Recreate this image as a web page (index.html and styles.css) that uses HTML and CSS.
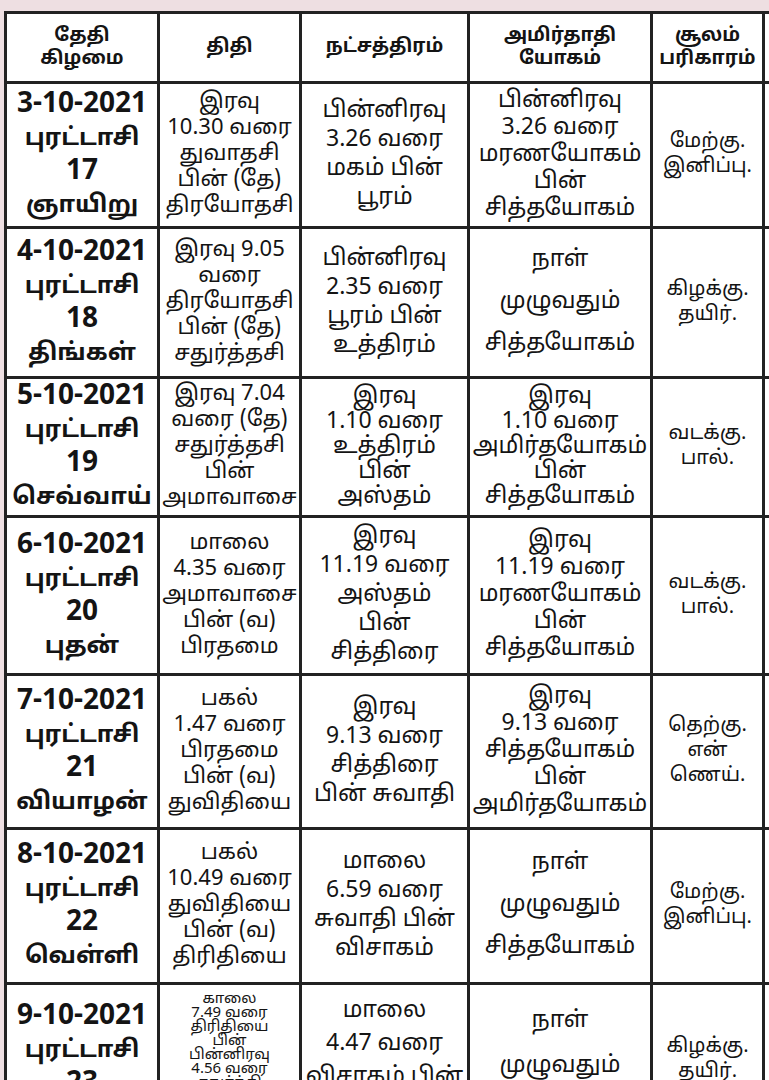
FILE: index.html
```html
<!DOCTYPE html>
<html lang="ta">
<head>
<meta charset="utf-8">
<title>பஞ்சாங்கம்</title>
<link rel="stylesheet" href="styles.css">
</head>
<body>
<div class="page">
<table class="pan">
  <colgroup>
    <col class="w1"><col class="w2"><col class="w3"><col class="w4"><col class="w5"><col class="w6">
  </colgroup>
  <thead>
    <tr class="hdr">
      <th>தேதி<br>கிழமை</th>
      <th>திதி</th>
      <th>நட்சத்திரம்</th>
      <th>அமிர்தாதி<br>யோகம்</th>
      <th>சூலம்<br>பரிகாரம்</th>
      <th></th>
    </tr>
  </thead>
  <tbody>
    <tr class="r1">
      <td class="date"><span class="num">3-10-2021</span><br>புரட்டாசி<br><span class="num">17</span><br>ஞாயிறு</td>
      <td class="thithi">இரவு<br>10.30 வரை<br>துவாதசி<br>பின் (தே)<br>திரயோதசி</td>
      <td class="star">பின்னிரவு<br>3.26 வரை<br>மகம் பின்<br>பூரம்</td>
      <td class="yoga">பின்னிரவு<br>3.26 வரை<br>மரணயோகம்<br>பின்<br>சித்தயோகம்</td>
      <td class="soolam">மேற்கு.<br>இனிப்பு.</td>
      <td></td>
    </tr>
    <tr class="r2">
      <td class="date"><span class="num">4-10-2021</span><br>புரட்டாசி<br><span class="num">18</span><br>திங்கள்</td>
      <td class="thithi">இரவு 9.05<br>வரை<br>திரயோதசி<br>பின் (தே)<br>சதுர்த்தசி</td>
      <td class="star">பின்னிரவு<br>2.35 வரை<br>பூரம் பின்<br>உத்திரம்</td>
      <td class="yoga wide">நாள்<br>முழுவதும்<br>சித்தயோகம்</td>
      <td class="soolam">கிழக்கு.<br>தயிர்.</td>
      <td></td>
    </tr>
    <tr class="r3">
      <td class="date"><span class="num">5-10-2021</span><br>புரட்டாசி<br><span class="num">19</span><br>செவ்வாய்</td>
      <td class="thithi">இரவு 7.04<br>வரை (தே)<br>சதுர்த்தசி<br>பின்<br>அமாவாசை</td>
      <td class="star tight">இரவு<br>1.10 வரை<br>உத்திரம்<br>பின்<br>அஸ்தம்</td>
      <td class="yoga tight">இரவு<br>1.10 வரை<br>அமிர்தயோகம்<br>பின்<br>சித்தயோகம்</td>
      <td class="soolam">வடக்கு.<br>பால்.</td>
      <td></td>
    </tr>
    <tr class="r4">
      <td class="date"><span class="num">6-10-2021</span><br>புரட்டாசி<br><span class="num">20</span><br>புதன்</td>
      <td class="thithi">மாலை<br>4.35 வரை<br>அமாவாசை<br>பின் (வ)<br>பிரதமை</td>
      <td class="star">இரவு<br>11.19 வரை<br>அஸ்தம்<br>பின்<br>சித்திரை</td>
      <td class="yoga">இரவு<br>11.19 வரை<br>மரணயோகம்<br>பின்<br>சித்தயோகம்</td>
      <td class="soolam">வடக்கு.<br>பால்.</td>
      <td></td>
    </tr>
    <tr class="r5">
      <td class="date"><span class="num">7-10-2021</span><br>புரட்டாசி<br><span class="num">21</span><br>வியாழன்</td>
      <td class="thithi">பகல்<br>1.47 வரை<br>பிரதமை<br>பின் (வ)<br>துவிதியை</td>
      <td class="star">இரவு<br>9.13 வரை<br>சித்திரை<br>பின் சுவாதி</td>
      <td class="yoga">இரவு<br>9.13 வரை<br>சித்தயோகம்<br>பின்<br>அமிர்தயோகம்</td>
      <td class="soolam">தெற்கு.<br>என்<br>ணெய்.</td>
      <td></td>
    </tr>
    <tr class="r6">
      <td class="date"><span class="num">8-10-2021</span><br>புரட்டாசி<br><span class="num">22</span><br>வெள்ளி</td>
      <td class="thithi">பகல்<br>10.49 வரை<br>துவிதியை<br>பின் (வ)<br>திரிதியை</td>
      <td class="star">மாலை<br>6.59 வரை<br>சுவாதி பின்<br>விசாகம்</td>
      <td class="yoga wide">நாள்<br>முழுவதும்<br>சித்தயோகம்</td>
      <td class="soolam">மேற்கு.<br>இனிப்பு.</td>
      <td></td>
    </tr>
    <tr class="r7">
      <td class="date top"><span class="num">9-10-2021</span><br>புரட்டாசி<br><span class="num">23</span><br>சனி</td>
      <td class="thithi tiny top">காலை<br>7.49 வரை<br>திரிதியை<br>பின்<br>பின்னிரவு<br>4.56 வரை<br>சதுர்த்தி</td>
      <td class="star top">மாலை<br>4.47 வரை<br>விசாகம் பின்<br>அனுஷம்</td>
      <td class="yoga wide top">நாள்<br>முழுவதும்<br>சித்தயோகம்</td>
      <td class="soolam top">கிழக்கு.<br>தயிர்.</td>
      <td></td>
    </tr>
  </tbody>
</table>
</div>
</body>
</html>
```

FILE: styles.css
```css
html, body {
  margin: 0;
  padding: 0;
}
body {
  background: #eedfe2;
  width: 769px;
  height: 1080px;
  overflow: hidden;
  font-family: "Noto Sans Tamil", "Lohit Tamil", "Latha", "Noto Sans", "Liberation Sans", sans-serif;
  color: #141414;
}
.page {
  padding: 11px 0 0 4px;
}
.pan {
  border-collapse: collapse;
  background: #ffffff;
  table-layout: fixed;
  width: 800px;
}
.w1 { width: 153px; }
.w2 { width: 142px; }
.w3 { width: 168px; }
.w4 { width: 183px; }
.w5 { width: 112px; }
.w6 { width: 42px; }
.pan th, .pan td {
  border: 3px solid #222;
  text-align: center;
  vertical-align: middle;
  padding: 0 2px;
  overflow: hidden;
  white-space: nowrap;
}
.hdr { height: 70px; }
.hdr th {
  font-weight: 700;
  font-size: 19px;
  line-height: 23px;
}
.r1 { height: 145px; }
.r2 { height: 150px; }
.r3 { height: 136px; }
.r4 { height: 158px; }
.r5 { height: 154px; }
.r6 { height: 155px; }
.r7 { height: 170px; }
.pan td.date {
  font-weight: 700;
  font-size: 24px;
  line-height: 33px;
  padding-top: 2px;
}
.date .num {
  font-size: 28px;
}
.thithi {
  font-size: 22px;
  line-height: 26px;
}
.star {
  font-size: 23px;
  line-height: 29px;
}
.yoga {
  font-size: 23px;
  line-height: 27px;
}
.star.tight, .yoga.tight { line-height: 25px; }
.yoga.wide { line-height: 42px; }
.soolam {
  font-size: 20px;
  line-height: 25px;
}
.thithi.tiny {
  font-size: 15px;
  line-height: 14px;
}
.pan td.top {
  vertical-align: top;
  padding-top: 14px;
}
.pan td.date.top { padding-top: 16px; }
.pan td.thithi.top { padding-top: 8px; }
.pan td.star.top { padding-top: 10px; line-height: 33px; }
.pan td.yoga.top { padding-top: 14px; line-height: 45px; }
.pan td.soolam.top { padding-top: 50px; }
```
